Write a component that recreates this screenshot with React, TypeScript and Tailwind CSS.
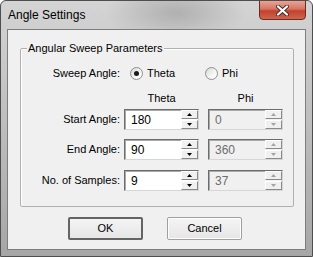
import { type FC } from 'react';

const font = { fontFamily: '"Liberation Sans", Arial, sans-serif' };

const Radio: FC<{ checked?: boolean }> = ({ checked }) => (
  <span className="flex h-[13px] w-[13px] items-center justify-center rounded-full border border-[#8e8f8f] bg-[linear-gradient(135deg,#d8d8d8,#f6f6f6_60%,#ffffff)]">
    {checked && <span className="h-[5px] w-[5px] rounded-full bg-[#1a1a1a]" />}
  </span>
);

const Arrow: FC<{ up?: boolean; disabled?: boolean }> = ({ up, disabled }) => (
  <svg width="5" height="3" viewBox="0 0 5 3" className="block">
    <path d={up ? 'M2.5 0 L5 3 L0 3 Z' : 'M0 0 L5 0 L2.5 3 Z'} fill={disabled ? '#a3a3a3' : '#000'} />
  </svg>
);

const SpinHalf: FC<{ up?: boolean; disabled?: boolean }> = ({ up, disabled }) => (
  <div className="flex h-[9px] items-center justify-center border border-t-white border-l-white border-r-[#8a8a8a] border-b-[#8a8a8a] bg-[#f0f0f0]">
    <Arrow up={up} disabled={disabled} />
  </div>
);

const Spinner: FC<{ value: string; disabled?: boolean }> = ({ value, disabled }) => (
  <div
    className={`relative h-[21px] w-[75px] border border-t-[#6c6c6c] border-l-[#6c6c6c] border-r-[#d6d6d6] border-b-[#d6d6d6] shadow-[inset_1px_1px_0_#a9a9a9] ${
      disabled ? 'bg-[#f0f0f0] text-[#6d6d6d]' : 'bg-white text-black'
    }`}
  >
    <div className="flex h-full items-center pl-[6px] text-[12px]">{value}</div>
    <div className="absolute top-0 right-0 bottom-0 flex w-[17px] flex-col gap-[1px]">
      <SpinHalf up disabled={disabled} />
      <SpinHalf disabled={disabled} />
    </div>
  </div>
);

const Row: FC<{ label: string; theta: string; phi: string; className?: string }> = ({
  label,
  theta,
  phi,
  className,
}) => (
  <div className={`flex h-[21px] items-center ${className ?? ''}`}>
    <div className="w-[100px] pr-[1px] text-right">{label}</div>
    <div className="ml-[3px]">
      <Spinner value={theta} />
    </div>
    <div className="ml-[9px]">
      <Spinner value={phi} disabled />
    </div>
  </div>
);

const App: FC = () => {
  return (
    <div
      className="relative flex h-[257px] w-[313px] flex-col overflow-hidden rounded-t-[6px] border border-[#4e4e4e] bg-[radial-gradient(ellipse_70px_30px_at_175px_12px,#b0b0b0_0%,#c4c4c4_60%,transparent_100%),linear-gradient(to_bottom,#d4d4d4,#c6c6c6_30%,#a6a6a6)] text-[11px] text-black"
      style={font}
    >
      <div className="flex h-[28px] shrink-0 items-center pl-[7px] text-[12px]">Angle Settings</div>
      <div className="absolute top-[-1px] right-[6px] flex h-[20px] w-[47px] items-center justify-center rounded-b-[4px] border border-[#6e2a20] bg-[linear-gradient(to_bottom,#e8a496,#d57462_45%,#c2412c_55%,#d06650)]">
        <svg width="13" height="11" viewBox="0 0 13 11">
          <path d="M2 1.5 L11 9.5 M11 1.5 L2 9.5" stroke="#4a2a26" strokeWidth="4" strokeLinecap="round" />
          <path d="M2 1.5 L11 9.5 M11 1.5 L2 9.5" stroke="#ffffff" strokeWidth="2.2" strokeLinecap="round" />
        </svg>
      </div>
      <div className="ml-[6px] h-[221px] w-[299px] border border-[#7d7d7d] bg-[#f0f0f0]">
        <div className="relative mt-[18px] ml-[12px] w-[274px] rounded-[2px] border border-[#b0b0b0] pt-[16px] pb-[15px] shadow-[inset_1px_1px_0_#ffffff]">
          <div className="absolute top-[-8px] left-[6px] bg-[#f0f0f0] px-[1px] leading-[14px]">
            Angular Sweep Parameters
          </div>
          <div className="flex h-[16px] items-center">
            <div className="w-[99px] text-right">Sweep Angle:</div>
            <div className="ml-[10px]">
              <Radio checked />
            </div>
            <div className="ml-[4px] w-[58px]">Theta</div>
            <Radio />
            <div className="ml-[4px]">Phi</div>
          </div>
          <div className="mt-[10px] flex h-[14px] items-center">
            <div className="w-[103px]" />
            <div className="w-[75px] text-center">Theta</div>
            <div className="ml-[9px] w-[75px] text-center">Phi</div>
          </div>
          <Row label="Start Angle:" theta="180" phi="0" className="mt-[4px]" />
          <Row label="End Angle:" theta="90" phi="360" className="mt-[9px]" />
          <Row label="No. of Samples:" theta="9" phi="37" className="mt-[10px]" />
        </div>
        <div className="mt-[10px] ml-[60px] flex gap-[24px]">
          <button className="flex h-[23px] w-[75px] items-center justify-center rounded-[2px] border-2 border-[#646464] bg-[linear-gradient(to_bottom,#f4f4f4,#e6e6e6)]">
            OK
          </button>
          <button className="flex h-[23px] w-[75px] items-center justify-center rounded-[2px] border border-[#a0a0a0] bg-[linear-gradient(to_bottom,#f4f4f4,#e6e6e6)] shadow-[inset_0_0_0_1px_#fdfdfd]">
            Cancel
          </button>
        </div>
      </div>
    </div>
  );
};

export default App;
